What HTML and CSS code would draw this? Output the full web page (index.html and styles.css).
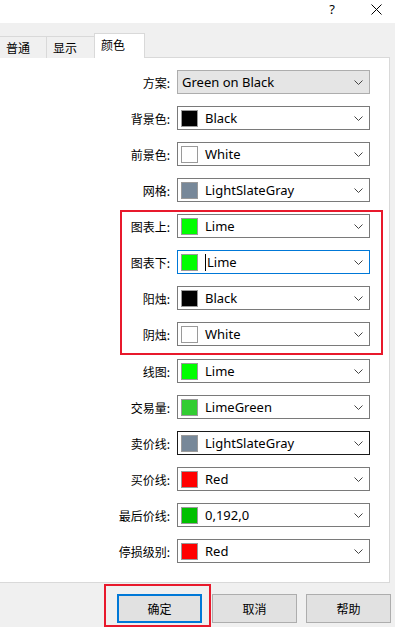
FILE: index.html
```html
<!DOCTYPE html>
<html lang="zh-CN">
    <head>
        <meta charset="UTF-8">
        <meta name="viewport" content="width=device-width, initial-scale=1.0">
        <title>属性</title>
        <link rel="stylesheet" href="styles.css">
    </head>
    <body>
        <div class="titlebar">
            <span class="help">?</span>
            <svg class="close" width="11" height="11" viewBox="0 0 11 11"><path d="M0.5 0.5 L10.5 10.5 M10.5 0.5 L0.5 10.5" stroke="#000" stroke-width="1" fill="none"/></svg>
        </div>

        <div class="tabs">
            <div class="tab">普通</div>
            <div class="tab">显示</div>
            <div class="tab active">颜色</div>
        </div>

        <div class="panel">
            <div class="row">
                <div class="label">方案:</div>
                <div class="combo scheme"><span class="val">Green on Black</span><svg class="arrow" width="9" height="5" viewBox="0 0 9 5"><path d="M0.5 0.5 L4.5 4.5 L8.5 0.5" stroke="#444" fill="none"/></svg></div>
            </div>
            <div class="row">
                <div class="label">背景色:</div>
                <div class="combo"><span class="sw" style="background:#000000"></span><span class="val">Black</span><svg class="arrow" width="9" height="5" viewBox="0 0 9 5"><path d="M0.5 0.5 L4.5 4.5 L8.5 0.5" stroke="#444" fill="none"/></svg></div>
            </div>
            <div class="row">
                <div class="label">前景色:</div>
                <div class="combo"><span class="sw" style="background:#ffffff"></span><span class="val">White</span><svg class="arrow" width="9" height="5" viewBox="0 0 9 5"><path d="M0.5 0.5 L4.5 4.5 L8.5 0.5" stroke="#444" fill="none"/></svg></div>
            </div>
            <div class="row">
                <div class="label">网格:</div>
                <div class="combo"><span class="sw" style="background:#778899"></span><span class="val">LightSlateGray</span><svg class="arrow" width="9" height="5" viewBox="0 0 9 5"><path d="M0.5 0.5 L4.5 4.5 L8.5 0.5" stroke="#444" fill="none"/></svg></div>
            </div>
            <div class="row">
                <div class="label">图表上:</div>
                <div class="combo"><span class="sw" style="background:#00ff00"></span><span class="val">Lime</span><svg class="arrow" width="9" height="5" viewBox="0 0 9 5"><path d="M0.5 0.5 L4.5 4.5 L8.5 0.5" stroke="#444" fill="none"/></svg></div>
            </div>
            <div class="row">
                <div class="label">图表下:</div>
                <div class="combo focus"><span class="sw" style="background:#00ff00"></span><span class="caret"></span><span class="val">Lime</span><svg class="arrow" width="9" height="5" viewBox="0 0 9 5"><path d="M0.5 0.5 L4.5 4.5 L8.5 0.5" stroke="#444" fill="none"/></svg></div>
            </div>
            <div class="row">
                <div class="label">阳烛:</div>
                <div class="combo"><span class="sw" style="background:#000000"></span><span class="val">Black</span><svg class="arrow" width="9" height="5" viewBox="0 0 9 5"><path d="M0.5 0.5 L4.5 4.5 L8.5 0.5" stroke="#444" fill="none"/></svg></div>
            </div>
            <div class="row">
                <div class="label">阴烛:</div>
                <div class="combo"><span class="sw" style="background:#ffffff"></span><span class="val">White</span><svg class="arrow" width="9" height="5" viewBox="0 0 9 5"><path d="M0.5 0.5 L4.5 4.5 L8.5 0.5" stroke="#444" fill="none"/></svg></div>
            </div>
            <div class="row after-group">
                <div class="label">线图:</div>
                <div class="combo"><span class="sw" style="background:#00ff00"></span><span class="val">Lime</span><svg class="arrow" width="9" height="5" viewBox="0 0 9 5"><path d="M0.5 0.5 L4.5 4.5 L8.5 0.5" stroke="#444" fill="none"/></svg></div>
            </div>
            <div class="row">
                <div class="label">交易量:</div>
                <div class="combo"><span class="sw" style="background:#32cd32"></span><span class="val">LimeGreen</span><svg class="arrow" width="9" height="5" viewBox="0 0 9 5"><path d="M0.5 0.5 L4.5 4.5 L8.5 0.5" stroke="#444" fill="none"/></svg></div>
            </div>
            <div class="row">
                <div class="label">卖价线:</div>
                <div class="combo hover"><span class="sw" style="background:#778899"></span><span class="val">LightSlateGray</span><svg class="arrow" width="9" height="5" viewBox="0 0 9 5"><path d="M0.5 0.5 L4.5 4.5 L8.5 0.5" stroke="#444" fill="none"/></svg></div>
            </div>
            <div class="row">
                <div class="label">买价线:</div>
                <div class="combo"><span class="sw" style="background:#ff0000"></span><span class="val">Red</span><svg class="arrow" width="9" height="5" viewBox="0 0 9 5"><path d="M0.5 0.5 L4.5 4.5 L8.5 0.5" stroke="#444" fill="none"/></svg></div>
            </div>
            <div class="row">
                <div class="label">最后价线:</div>
                <div class="combo"><span class="sw" style="background:#00c000"></span><span class="val">0,192,0</span><svg class="arrow" width="9" height="5" viewBox="0 0 9 5"><path d="M0.5 0.5 L4.5 4.5 L8.5 0.5" stroke="#444" fill="none"/></svg></div>
            </div>
            <div class="row">
                <div class="label">停损级别:</div>
                <div class="combo"><span class="sw" style="background:#ff0000"></span><span class="val">Red</span><svg class="arrow" width="9" height="5" viewBox="0 0 9 5"><path d="M0.5 0.5 L4.5 4.5 L8.5 0.5" stroke="#444" fill="none"/></svg></div>
            </div>
        </div>

        <div class="buttons">
            <button class="btn default">确定</button>
            <button class="btn">取消</button>
            <button class="btn">帮助</button>
        </div>

        <!-- red highlight marks drawn over the dialog -->
        <div class="mark mark-group"></div>
        <div class="mark mark-ok"></div>
    </body>
</html>
```

FILE: styles.css
```css
*{
    padding: 0;
    margin: 0;
    box-sizing: border-box;
}
body{
    width: 395px;
    height: 627px;
    overflow: hidden;
    position: relative;
    background: #f0f0f0;
    font-family: "Noto Sans", "Noto Sans CJK SC", sans-serif;
    color: #000;
}
.titlebar{height: 23px; background: #fff; display: flex; align-items: flex-start; justify-content: flex-end; padding-right: 13px;}
.help{font-family: "Noto Sans", sans-serif; font-size: 13px; line-height: 18px; margin-right: 36px;}
.close{margin-top: 4px;}

.tabs{display: flex; align-items: flex-end; height: 35px; padding-top: 10px;}
.tab{
    height: 22px;
    border: 1px solid #d9d9d9;
    border-bottom: none;
    margin-right: -1px;
    padding: 0 6px;
    font-family: "Noto Sans CJK SC", sans-serif;
    font-size: 12px;
    line-height: 21px;
    background: #f0f0f0;
}
.tab:first-child{width: 48px; margin-left: -1px;}
.tab:nth-child(2){width: 49px;}
.tab.active{height: 25px; width: 51px; background: #fff; position: relative; z-index: 1; padding-left: 6px; line-height: 22px;}

.panel{
    width: 390px;
    height: 526px;
    margin-top: -1px;
    background: #fff;
    border: 1px solid #d9d9d9;
    border-left: none;
    padding-top: 12px;
    display: flex;
    flex-direction: column;
    gap: 12px;
}
.row{display: flex; align-items: center; height: 24px;}
.row.after-group{margin-top: 1px;}
.label{width: 170px; text-align: right; font-family: "Noto Sans CJK SC", sans-serif; font-size: 12px; margin-right: 7px;}
.combo{
    width: 193px;
    height: 24px;
    border: 1px solid #7a7a7a;
    background: #fff;
    display: flex;
    align-items: center;
    padding: 0 6px 0 3px;
    font-size: 13px;
}
.combo .val{flex: 1; white-space: nowrap;}
.combo .sw{width: 17px; height: 17px; border: 1px solid #9a9a9a; margin-right: 7px;}
.combo .arrow{flex: none;}
.combo.scheme{background: #e5e5e5; border-color: #adadad; padding-left: 4px;}
.combo.focus{border-color: #0078d7;}
.combo.hover{border-color: #1a1a1a;}
.caret{width: 1px; height: 17px; background: #000; margin-right: 1px;}

.buttons{display: flex; justify-content: flex-end; gap: 10px; padding: 11px 4px 0 0;}
.btn{
    width: 85px;
    height: 29px;
    border: 1px solid #adadad;
    background: #e1e1e1;
    font-family: "Noto Sans CJK SC", sans-serif;
    font-size: 12px;
    color: #000;
}
.btn:last-child{margin-left: -1px;}
.btn.default{border: 2px solid #0078d7;}

.mark{position: absolute; border: 2px solid #e8192c;}
.mark-group{left: 120px; top: 210px; width: 263px; height: 145px;}
.mark-ok{left: 104px; top: 584px; width: 107px; height: 43px;}
```
